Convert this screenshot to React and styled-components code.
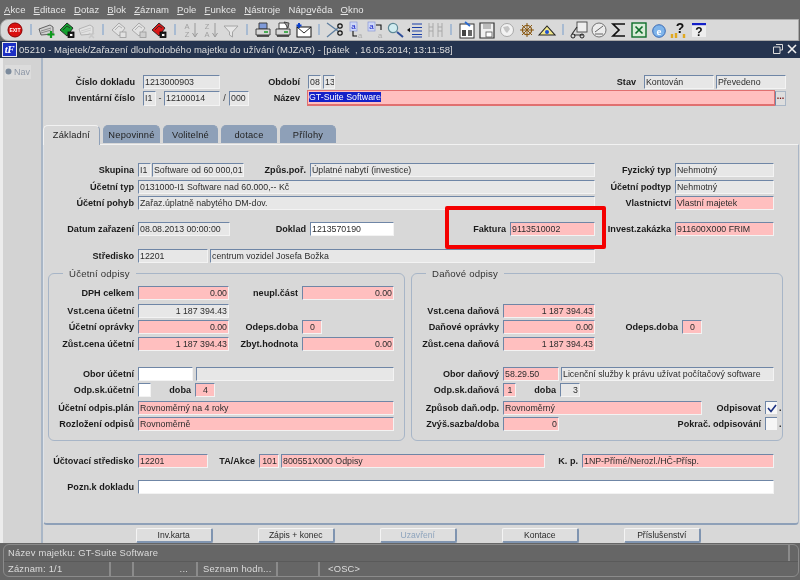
import React from 'react';
import styled, { createGlobalStyle } from 'styled-components';

const Global = createGlobalStyle`
  html, body { margin: 0; padding: 0; background: #666; }
  * { box-sizing: border-box; }
`;

const Screen = styled.div`
  width: 800px;
  height: 580px;
  overflow: hidden;
  display: flex;
  flex-direction: column;
  background: #d8d8d8;
  color: #1c1c1c;
  font-family: "Liberation Sans", Arial, sans-serif;
  font-size: 9px;
  filter: blur(0.3px);
`;

const MenuBar = styled.div`
  height: 19px;
  background: #666;
  color: #e6e6e6;
  display: flex;
  align-items: center;
  padding-left: 4px;
  gap: 8px;
  font-size: 9.5px;
  letter-spacing: 0.1px;
`;

const Toolbar = styled.div`
  height: 22px;
  background: #666;
  display: flex;
`;

const ToolbarInner = styled.div`
  flex: 1;
  margin-right: 1px;
  background: #d9d9d9;
  border: 1px solid #a9a9a9;
  border-radius: 8px 0 0 8px;
  display: flex;
  align-items: center;
  padding-left: 4px;
`;

const Slot = styled.div`
  width: 20px;
  height: 20px;
  display: flex;
  align-items: center;
  justify-content: center;
  flex: none;
`;

const Sep = styled.div`
  width: 12px;
  flex: none;
  display: flex;
  justify-content: center;
  &::after {
    content: "";
    width: 2px;
    height: 11px;
    background: #a8bbd2;
  }
`;

const TitleBar = styled.div`
  height: 17px;
  background: #25344f;
  color: #dcdcdc;
  display: flex;
  align-items: center;
  padding: 0 2px;
  font-size: 9.5px;
  letter-spacing: 0.03px;
  white-space: pre;
`;

const Logo = styled.div`
  width: 15px;
  height: 15px;
  background: #1c2fc4;
  border: 1px solid #e8e8e8;
  color: #fff;
  font: italic bold 11px "Liberation Serif", serif;
  line-height: 12px;
  text-align: center;
  margin-right: 2px;
  letter-spacing: -0.5px;
`;

const WindowIcons = styled.div`
  margin-left: auto;
  display: flex;
  gap: 4px;
  padding-right: 1px;
`;

const Body = styled.div`
  height: 486px;
  display: flex;
`;

const NavColumn = styled.div`
  width: 43px;
  flex: none;
  background: #d3d3d3;
  border-left: 3px solid #ececec;
  border-right: 2px solid #a9b6c6;
  padding: 7px 0 0 2px;
`;

const NavItem = styled.div`
  width: 26px;
  height: 14px;
  background: #dcdcdc;
  color: #8c96a6;
  display: flex;
  align-items: center;
  gap: 2px;
  font-size: 9px;
`;

const Content = styled.div`
  flex: 1;
  min-width: 0;
  display: flex;
  flex-direction: column;
`;

const Header = styled.div`
  height: 67px;
  padding-top: 17px;
`;

const Row = styled.div`
  display: flex;
  align-items: center;
  height: ${({ $h }) => $h || 14}px;
  margin-top: ${({ $mt }) => $mt || 0}px;
`;

const Label = styled.div`
  width: ${({ $w }) => $w}px;
  margin-right: ${({ $gap }) => ($gap === undefined ? 4 : $gap)}px;
  flex: none;
  text-align: right;
  font-weight: bold;
  white-space: nowrap;
  font-size: 9.1px;
  color: #1a1a1a;
`;

const fieldBg = { pink: '#ffbfbf', gray: '#e7e7e7', white: '#ffffff' };

const Field = styled.div`
  width: ${({ $w }) => $w}px;
  height: ${({ $h }) => $h || 14}px;
  margin-left: ${({ $ml }) => $ml || 0}px;
  flex: none;
  background: ${({ $tone }) => fieldBg[$tone || 'gray']};
  border-top: 1.5px solid #6f86a6;
  border-left: 1.5px solid #6f86a6;
  border-right: 1px solid #f3f3f3;
  border-bottom: 1px solid #f3f3f3;
  text-align: ${({ $right, $center }) => ($right ? 'right' : $center ? 'center' : 'left')};
  padding: 0 ${({ $right }) => ($right ? 1 : 0)}px 0 1px;
  line-height: 13px;
  font-size: 8.8px;
  color: #2c2c2c;
  white-space: nowrap;
  overflow: hidden;
`;

const NameField = styled(Field)`
  background: #ffbfbf;
  border: 1px solid #e07070;
  border-bottom-width: 2px;
  line-height: 13px;
  padding-left: 1px;
`;

const Selected = styled.span`
  background: #1420c8;
  color: #fff;
`;

const MoreButton = styled.div`
  width: 11px;
  height: 15px;
  background: #dedede;
  border: 1px solid #a9b6c6;
  border-left-color: #7088a8;
  color: #7a1010;
  font-weight: bold;
  font-size: 9px;
  line-height: 9px;
  text-align: center;
`;

const Glyph = styled.div`
  width: ${({ $w }) => $w}px;
  flex: none;
  text-align: center;
  color: #333;
`;

const TabStrip = styled.div`
  display: flex;
  gap: 3px;
  height: 19px;
  position: relative;
  z-index: 1;
`;

const Tab = styled.div`
  width: ${({ $w }) => $w}px;
  height: ${({ $active }) => ($active ? 20 : 18)}px;
  background: ${({ $active }) => ($active ? '#d8d8d8' : '#8ea0b8')};
  border-radius: 5px 5px 0 0;
  border-top: 1px solid ${({ $active }) => ($active ? '#f2f2f2' : '#8ea0b8')};
  border-left: 1px solid ${({ $active }) => ($active ? '#f2f2f2' : '#8ea0b8')};
  border-right: 1px solid #8ea0b8;
  text-align: center;
  line-height: 18px;
  font-size: 9.3px;
  letter-spacing: 0.2px;
  color: #222;
`;

const Panel = styled.div`
  position: relative;
  height: 381px;
  margin-right: 1px;
  border-top: 1px solid #f2f2f2;
  border-left: 1px solid #dfe3e8;
  border-right: 1px solid #aab6c6;
  border-bottom: 2px solid #8ea0b8;
  border-radius: 0 0 4px 4px;
  padding-top: 18px;
`;

const Highlight = styled.div`
  position: absolute;
  left: 401px;
  top: 61px;
  width: 161px;
  height: 43px;
  border: 4px solid #f40000;
  border-radius: 2px;
`;

const Groups = styled.div`
  display: flex;
  gap: 6px;
  margin: 5px 0 0 4px;
`;

const Group = styled.fieldset`
  width: ${({ $w }) => $w}px;
  height: 173px;
  margin: 0;
  padding: 6px 0 0;
  min-width: 0;
  border: 1px solid #a7b5c7;
  border-radius: 6px;
  legend {
    margin-left: 14px;
    padding: 0 6px;
    height: 12px;
    line-height: 12px;
    font-size: 9.6px;
    letter-spacing: 0.2px;
    color: #333;
  }
`;

const Check = styled.div`
  width: 12px;
  height: 13px;
  flex: none;
  background: #f6f6f6;
  border-top: 1.5px solid #6f86a6;
  border-left: 1.5px solid #6f86a6;
  display: flex;
  align-items: center;
  justify-content: center;
`;

const Dot = styled.span`
  margin-left: 2px;
  font-weight: bold;
`;

const ButtonBar = styled.div`
  display: flex;
  gap: 45.5px;
  padding: 3px 0 0 93px;
`;

const ActionButton = styled.div`
  width: 76.5px;
  height: 15px;
  background: #dedede;
  border-top: 1px solid #f4f4f4;
  border-left: 1px solid #f4f4f4;
  border-right: 2px solid #7f94b0;
  border-bottom: 2px solid #7f94b0;
  border-radius: 2px;
  text-align: center;
  line-height: 12px;
  font-size: 8.6px;
  color: ${({ $disabled }) => ($disabled ? '#8ea4bd' : '#2a2a2a')};
`;

const StatusBar = styled.div`
  flex: 1;
  background: #666;
  padding: 1px 1px 3px 3px;
  color: #dcdcdc;
  font-size: 9.4px;
  letter-spacing: 0.2px;
  display: flex;
`;

const StatusInner = styled.div`
  flex: 1;
  border: 1px solid #8b8b8b;
  border-radius: 6px;
  display: flex;
  flex-direction: column;
`;

const StatusMessage = styled.div`
  height: 16px;
  line-height: 16px;
  padding-left: 4px;
  margin-right: 8px;
  border-right: 2px solid #8b8b8b;
`;

const StatusCells = styled.div`
  flex: 1;
  display: flex;
  border-top: 1px solid #5a5a5a;
  line-height: 14px;
`;

const StatusCell = styled.div`
  width: ${({ $w }) => $w}px;
  flex: ${({ $w }) => ($w ? 'none' : 1)};
  padding: 0 ${({ $inset }) => $inset || 4}px;
  text-align: ${({ $right }) => ($right ? 'right' : 'left')};
  border-right: ${({ $open }) => ($open ? 'none' : '2px solid #8b8b8b')};
  white-space: nowrap;
`;

// toolbar pictures, all on a 20 x 20 grid
const Pic = ({ children }) => <svg width="20" height="20" viewBox="0 0 20 20">{children}</svg>;

const Exit = () => (
  <Pic>
    <circle cx="10" cy="10" r="7" fill="#d90f0f" stroke="#8a0000" />
    <text x="10" y="12" fontSize="5" fontWeight="bold" fill="#fff" textAnchor="middle" fontFamily="Liberation Sans">EXIT</text>
  </Pic>
);
const Stack = ({ tone, badge, dim }) => (
  <Pic>
    <path d="M2 9 L13 5 L16 7 L16 14 L4 15 Z" fill={tone} stroke={dim ? '#a8a8a8' : '#444'} strokeWidth="0.8" />
    <path d="M4 11 L14 8 M4 13 L14 10" stroke={dim ? '#c4c4c4' : '#777'} strokeWidth="0.8" />
    {badge === 'plus' && <path d="M14 11 V18 M10.5 14.5 H17.5" stroke="#0c9a1c" strokeWidth="2.2" />}
    {badge === 'cross' && <path d="M12 13 L17 18 M17 13 L12 18" stroke="#c8c8c8" strokeWidth="1.5" />}
  </Pic>
);
const Doc = ({ tone, edge, mark }) => (
  <Pic>
    <path d="M3 10 L10 3 L16 8 L10 16 Z" fill={tone} stroke={edge} strokeWidth="0.9" />
    <path d="M6 10 L10 6 L13 8" stroke={edge} strokeWidth="0.8" fill="none" />
    <rect x="11" y="12" width="6" height="5.5" fill={mark} stroke={edge === '#222' ? '#000' : '#999'} strokeWidth="0.8" />
    {edge === '#222' && <rect x="13" y="14" width="2.4" height="2" fill="#fff" />}
  </Pic>
);
const Sort = ({ top, bottom }) => (
  <Pic>
    <text x="6" y="9" fontSize="7.5" fill="#a0a0a0" fontFamily="Liberation Sans" textAnchor="middle">{top}</text>
    <text x="6" y="17" fontSize="7.5" fill="#a0a0a0" fontFamily="Liberation Sans" textAnchor="middle">{bottom}</text>
    <path d="M14 3 V16 M11.5 13 L14 17 L16.5 13" stroke="#999" strokeWidth="1" fill="none" />
  </Pic>
);
const Funnel = () => (
  <Pic>
    <path d="M3 6 H17 L11.5 12 V17 L8.5 15 V12 Z" fill="#e6e6e6" stroke="#a4a4a4" />
  </Pic>
);
const Printer = ({ tilt }) => (
  <Pic>
    <path d="M6 3 H14 V9 H6 Z" fill={tilt ? '#fff' : '#7f9ad8'} stroke="#333" strokeWidth="0.9" />
    {tilt && <path d="M11 2 L16 3 L15 8 Z" fill="#9a9a9a" stroke="#333" strokeWidth="0.8" />}
    <path d="M3 9 H17 V15 H3 Z" fill="#d8d8d8" stroke="#333" strokeWidth="0.9" />
    <path d="M4 16 H16" stroke="#333" strokeWidth="1.6" />
    <path d="M11 12 H15" stroke="#0c9a1c" strokeWidth="1.4" />
  </Pic>
);
const Mail = () => (
  <Pic>
    <rect x="4" y="7" width="14" height="10" fill="#fff" stroke="#111" />
    <path d="M4 7 L11 13 L18 7" fill="none" stroke="#111" strokeWidth="0.9" />
    <path d="M6 3 V8 M3.5 5.5 H8.5" stroke="#0a3ec8" strokeWidth="1.9" />
  </Pic>
);
const Scissors = () => (
  <Pic>
    <path d="M2 3 L13 11 M2 17 L13 8" stroke="#5f7fa0" strokeWidth="1.3" />
    <circle cx="15" cy="6" r="2.2" fill="none" stroke="#111" strokeWidth="1.2" />
    <circle cx="15" cy="13" r="2.2" fill="none" stroke="#111" strokeWidth="1.2" />
  </Pic>
);
const Letter = ({ flip }) => (
  <Pic>
    <rect x={flip ? 3 : 5} y="2" width="7" height="9" fill="#cfd8f6" stroke="#8a98d8" strokeWidth="0.7" />
    <text x={flip ? 6.5 : 8.5} y="9" fontSize="8" fill="#1420c8" fontFamily="Liberation Sans" textAnchor="middle">a</text>
    <text x="15" y="18" fontSize="7.5" fill="#aaa" fontFamily="Liberation Sans" textAnchor="middle">a</text>
    <path d={flip ? 'M11 5 H16 V10' : 'M8 11 V16 H12'} fill="none" stroke="#111" strokeWidth="1.1" />
  </Pic>
);
const Lens = () => (
  <Pic>
    <circle cx="8" cy="8" r="4.6" fill="#d0ecf0" stroke="#5f8a98" strokeWidth="1.2" />
    <path d="M12 12 L18 17" stroke="#2f4f9a" strokeWidth="2" />
  </Pic>
);
const ListLines = () => (
  <Pic>
    <path d="M2 10 L5 7.8 V12.2 Z" fill="#111" />
    <path d="M7 4 H17 M7 7.5 H17 M7 11 H17 M7 14.5 H17 M7 17 H17" stroke="#1b3fa8" strokeWidth="1.2" />
  </Pic>
);
const GridLines = () => (
  <Pic>
    <path d="M4 3 V17 M8 3 V17 M13 3 V17 M17 3 V17 M4 7 H8 M4 11 H8 M13 7 H17 M13 11 H17" stroke="#a4a4a4" strokeWidth="0.9" />
  </Pic>
);
const Clipboard = () => (
  <Pic>
    <rect x="3" y="4" width="14" height="14" fill="#fff" stroke="#333" />
    <rect x="5" y="10" width="4" height="6" fill="#444" />
    <rect x="11" y="10" width="4" height="6" fill="#666" />
    <path d="M8 2 L13 6" stroke="#2a6ad0" strokeWidth="1.8" />
  </Pic>
);
const Disk = () => (
  <Pic>
    <path d="M3 3 H17 V18 H3 Z" fill="#f0f0f0" stroke="#333" strokeWidth="1.2" />
    <rect x="6" y="4" width="8" height="5" fill="#bbb" />
    <rect x="9" y="12" width="6" height="5" fill="#fff" stroke="#555" strokeWidth="0.8" />
  </Pic>
);
const Globe = () => (
  <Pic>
    <circle cx="10" cy="10" r="6.5" fill="#f2f2f2" stroke="#a8a8a8" />
    <path d="M6 7 L11 6 L13 9 L10 13 L8 11 Z" fill="#c4c4c4" />
  </Pic>
);
const Wheel = () => (
  <Pic>
    <circle cx="10" cy="10" r="4.6" fill="none" stroke="#8a5a14" strokeWidth="1.3" />
    <path d="M10 3 V17 M3 10 H17 M5 5 L15 15 M15 5 L5 15" stroke="#8a5a14" strokeWidth="1" />
  </Pic>
);
const Roof = () => (
  <Pic>
    <path d="M2 15 L10 6 L18 15 Z" fill="#f0e68a" stroke="#222" strokeWidth="1.1" />
    <circle cx="10" cy="12" r="2" fill="#1d4fd0" />
  </Pic>
);
const Cart = () => (
  <Pic>
    <rect x="8" y="2" width="10" height="10" fill="#eee" stroke="#444" strokeWidth="0.9" />
    <path d="M3 14 L8 7 M5 15 H14" stroke="#333" strokeWidth="1.2" />
    <circle cx="4" cy="16" r="2" fill="none" stroke="#111" strokeWidth="0.9" />
    <circle cx="13" cy="16" r="2" fill="none" stroke="#111" strokeWidth="0.9" />
  </Pic>
);
const Dial = () => (
  <Pic>
    <circle cx="10" cy="10" r="7" fill="#ececec" stroke="#666" strokeWidth="0.9" />
    <path d="M6 12 L14 6 M6 14 H14" stroke="#555" strokeWidth="0.9" />
  </Pic>
);
const Sigma = () => (
  <Pic>
    <path d="M16 4 H4 L10 10 L4 16 H16" fill="none" stroke="#111" strokeWidth="1.7" />
  </Pic>
);
const Excel = () => (
  <Pic>
    <rect x="3" y="3" width="14" height="14" fill="#d8ecd8" stroke="#0e6e2a" strokeWidth="1.4" />
    <path d="M6.5 6.5 L13.5 13.5 M13.5 6.5 L6.5 13.5" stroke="#0e6e2a" strokeWidth="1.7" />
  </Pic>
);
const Ie = () => (
  <Pic>
    <circle cx="10" cy="11" r="6.3" fill="#7fb4ea" stroke="#2a5fb0" strokeWidth="0.9" />
    <text x="10" y="15" fontSize="11" fontWeight="bold" fill="#fff" textAnchor="middle" fontFamily="Liberation Serif">e</text>
  </Pic>
);
const HelpCoins = () => (
  <Pic>
    <text x="11" y="13" fontSize="14" fontWeight="bold" fill="#111" textAnchor="middle" fontFamily="Liberation Sans">?</text>
    <path d="M3 14 V18 M7 13 V18 M15 14 V18" stroke="#e0a820" strokeWidth="2.4" />
  </Pic>
);
const HelpBar = () => (
  <Pic>
    <rect x="3" y="3" width="14" height="14" fill="#eee" />
    <rect x="3" y="3" width="14" height="2.2" fill="#1420c8" />
    <text x="10" y="16" fontSize="12" fontWeight="bold" fill="#111" textAnchor="middle" fontFamily="Liberation Sans">?</text>
  </Pic>
);

const toolGroups = [
  [<Exit />],
  [<Stack tone="#d0d0d0" badge="plus" />, <Doc tone="#14a030" edge="#222" mark="#222" />, <Stack tone="#e2e2e2" badge="cross" dim />],
  [<Doc tone="#e2e2e2" edge="#a4a4a4" mark="#e2e2e2" />, <Doc tone="#e2e2e2" edge="#a4a4a4" mark="#cfcfcf" />, <Doc tone="#d81818" edge="#222" mark="#222" />],
  [<Sort top="A" bottom="Z" />, <Sort top="Z" bottom="A" />, <Funnel />],
  [<Printer />, <Printer tilt />, <Mail />],
  [<Scissors />, <Letter />, <Letter flip />, <Lens />, <ListLines />, <GridLines />],
  [<Clipboard />, <Disk />, <Globe />, <Wheel />, <Roof />],
  [<Cart />, <Dial />, <Sigma />, <Excel />, <Ie />, <HelpCoins />, <HelpBar />],
];

const menus = [
  ['', 'A', 'kce'], ['', 'E', 'ditace'], ['', 'D', 'otaz'], ['', 'B', 'lok'], ['', 'Z', 'áznam'],
  ['', 'P', 'ole'], ['', 'F', 'unkce'], ['', 'N', 'ástroje'], ['Náp', 'o', 'věda'], ['', 'O', 'kno'],
];

const tabs = [['Základní', 57], ['Nepovinné', 57], ['Volitelné', 55], ['dotace', 56], ['Přílohy', 56]];
const buttons = ['Inv.karta', 'Zápis + konec', 'Uzavření', 'Kontace', 'Příslušenství'];

const App = () => (
  <Screen>
    <Global />
    <MenuBar>
      {menus.map(([pre, key, post]) => (
        <span key={pre + key + post}>{pre}<u>{key}</u>{post}</span>
      ))}
    </MenuBar>
    <Toolbar>
      <ToolbarInner>
        {toolGroups.map((group, i) => (
          <React.Fragment key={i}>
            {i > 0 && <Sep />}
            {group.map((icon, j) => <Slot key={j}>{icon}</Slot>)}
          </React.Fragment>
        ))}
      </ToolbarInner>
    </Toolbar>
    <TitleBar>
      <Logo>tF</Logo>
      05210 - Majetek/Zařazení dlouhodobého majetku do užívání (MJZAR) - [pátek  , 16.05.2014; 13:11:58]
      <WindowIcons>
        <svg width="10" height="10" viewBox="0 0 10 10">
          <path d="M3 .5 H9.5 V6 H7 M.5 3 H7 V9.5 H.5 Z" fill="none" stroke="#dcdcdc" />
        </svg>
        <svg width="10" height="10" viewBox="0 0 10 10">
          <path d="M1 1 L9 9 M9 1 L1 9" stroke="#f0f0f0" strokeWidth="1.6" />
        </svg>
      </WindowIcons>
    </TitleBar>
    <Body>
      <NavColumn>
        <NavItem>
          <svg width="7" height="7" viewBox="0 0 7 7"><circle cx="3.5" cy="3.5" r="3" fill="#7b8a9c" /></svg>
          Nav
        </NavItem>
      </NavColumn>
      <Content>
        <Header>
          <Row>
            <Label $w={92} $gap={8}>Číslo dokladu</Label>
            <Field $w={77}>1213000903</Field>
            <Label $w={80} $gap={8}>Období</Label>
            <Field $w={13}>08</Field>
            <Field $w={12} $ml={2}>13</Field>
            <Label $w={301} $gap={8}>Stav</Label>
            <Field $w={70}>Kontován</Field>
            <Field $w={70} $ml={2}>Převedeno</Field>
          </Row>
          <Row $h={15} $mt={2}>
            <Label $w={92} $gap={8}>Inventární číslo</Label>
            <Field $w={13} $h={15}>I1</Field>
            <Glyph $w={8}>-</Glyph>
            <Field $w={56} $h={15}>12100014</Field>
            <Glyph $w={9}>/</Glyph>
            <Field $w={20} $h={15}>000</Field>
            <Label $w={51} $gap={7}>Název</Label>
            <NameField $w={468} $h={16}><Selected>GT-Suite Software</Selected></NameField>
            <MoreButton>...</MoreButton>
          </Row>
        </Header>
        <TabStrip>
          {tabs.map(([name, w], i) => <Tab key={name} $w={w} $active={i === 0}>{name}</Tab>)}
        </TabStrip>
        <Panel>
          <Highlight />
          <Row>
            <Label $w={90}>Skupina</Label>
            <Field $w={13}>I1</Field>
            <Field $w={92} $ml={1}>Software od 60 000,01</Field>
            <Label $w={62}>Způs.poř.</Label>
            <Field $w={285}>Úplatné nabytí (investice)</Field>
            <Label $w={76}>Fyzický typ</Label>
            <Field $w={99}>Nehmotný</Field>
          </Row>
          <Row $mt={3}>
            <Label $w={90}>Účetní typ</Label>
            <Field $w={457}>0131000-I1 Software nad 60.000,-- Kč</Field>
            <Label $w={76}>Účetní podtyp</Label>
            <Field $w={99}>Nehmotný</Field>
          </Row>
          <Row $mt={2}>
            <Label $w={90}>Účetní pohyb</Label>
            <Field $w={457}>Zařaz.úplatně nabytého DM-dov.</Field>
            <Label $w={76}>Vlastnictví</Label>
            <Field $w={99} $tone="pink">Vlastní majetek</Field>
          </Row>
          <Row $mt={12}>
            <Label $w={90}>Datum zařazení</Label>
            <Field $w={92}>08.08.2013 00:00:00</Field>
            <Label $w={76}>Doklad</Label>
            <Field $w={84} $tone="white">1213570190</Field>
            <Label $w={112}>Faktura</Label>
            <Field $w={85} $tone="pink">9113510002</Field>
            <Label $w={76}>Invest.zakázka</Label>
            <Field $w={99} $tone="pink">911600X000 FRIM</Field>
          </Row>
          <Row $mt={13}>
            <Label $w={90}>Středisko</Label>
            <Field $w={70}>12201</Field>
            <Field $w={385} $ml={2}>centrum vozidel Josefa Božka</Field>
          </Row>
          <Groups>
            <Group $w={357}>
              <legend>Účetní odpisy</legend>
              <Row>
                <Label $w={85}>DPH celkem</Label>
                <Field $w={91} $tone="pink" $right>0.00</Field>
                <Label $w={69}>neupl.část</Label>
                <Field $w={92} $tone="pink" $right>0.00</Field>
              </Row>
              <Row $mt={4}>
                <Label $w={85}>Vst.cena účetní</Label>
                <Field $w={91} $right>1 187 394.43</Field>
              </Row>
              <Row $mt={2}>
                <Label $w={85}>Účetní oprávky</Label>
                <Field $w={91} $tone="pink" $right>0.00</Field>
                <Label $w={69}>Odeps.doba</Label>
                <Field $w={20} $tone="pink" $center>0</Field>
              </Row>
              <Row $mt={3}>
                <Label $w={85}>Zůst.cena účetní</Label>
                <Field $w={91} $tone="pink" $right>1 187 394.43</Field>
                <Label $w={69}>Zbyt.hodnota</Label>
                <Field $w={92} $tone="pink" $right>0.00</Field>
              </Row>
              <Row $mt={16}>
                <Label $w={85}>Obor účetní</Label>
                <Field $w={55} $tone="white" />
                <Field $w={198} $ml={3} />
              </Row>
              <Row $mt={2}>
                <Label $w={85}>Odp.sk.účetní</Label>
                <Field $w={13} $tone="white" />
                <Label $w={40}>doba</Label>
                <Field $w={20} $tone="pink" $center>4</Field>
              </Row>
              <Row $mt={4}>
                <Label $w={85}>Účetní odpis.plán</Label>
                <Field $w={256} $tone="pink">Rovnoměrný na 4 roky</Field>
              </Row>
              <Row $mt={2}>
                <Label $w={85}>Rozložení odpisů</Label>
                <Field $w={256} $tone="pink">Rovnoměrně</Field>
              </Row>
            </Group>
            <Group $w={372}>
              <legend>Daňové odpisy</legend>
              <Row $mt={18}>
                <Label $w={87}>Vst.cena daňová</Label>
                <Field $w={92} $tone="pink" $right>1 187 394.43</Field>
              </Row>
              <Row $mt={2}>
                <Label $w={87}>Daňové oprávky</Label>
                <Field $w={92} $tone="pink" $right>0.00</Field>
                <Label $w={83}>Odeps.doba</Label>
                <Field $w={20} $tone="pink" $center>0</Field>
              </Row>
              <Row $mt={3}>
                <Label $w={87}>Zůst.cena daňová</Label>
                <Field $w={92} $tone="pink" $right>1 187 394.43</Field>
              </Row>
              <Row $mt={16}>
                <Label $w={87}>Obor daňový</Label>
                <Field $w={56} $tone="pink">58.29.50</Field>
                <Field $w={213} $ml={2}>Licenční služby k právu užívat počítačový software</Field>
              </Row>
              <Row $mt={2}>
                <Label $w={87}>Odp.sk.daňová</Label>
                <Field $w={13} $tone="pink" $center>1</Field>
                <Label $w={40}>doba</Label>
                <Field $w={20} $right>3</Field>
              </Row>
              <Row $mt={4}>
                <Label $w={87}>Způsob daň.odp.</Label>
                <Field $w={199} $tone="pink">Rovnoměrný</Field>
                <Label $w={59}>Odpisovat</Label>
                <Check>
                  <svg width="10" height="9" viewBox="0 0 10 9">
                    <path d="M1 4 L4 7.5 L9 1" fill="none" stroke="#1a2f80" strokeWidth="1.6" />
                  </svg>
                </Check>
                <Dot>.</Dot>
              </Row>
              <Row $mt={2}>
                <Label $w={87}>Zvýš.sazba/doba</Label>
                <Field $w={56} $tone="pink" $right>0</Field>
                <Label $w={202}>Pokrač. odpisování</Label>
                <Check />
                <Dot>.</Dot>
              </Row>
            </Group>
          </Groups>
          <Row $mt={13}>
            <Label $w={90}>Účtovací středisko</Label>
            <Field $w={70} $tone="pink">12201</Field>
            <Label $w={47}>TA/Akce</Label>
            <Field $w={20} $tone="pink" $center>101</Field>
            <Field $w={264} $ml={2} $tone="pink">800551X000 Odpisy</Field>
            <Label $w={33}>K. p.</Label>
            <Field $w={192} $tone="pink">1NP-Přímé/Nerozl./HČ-Přísp.</Field>
          </Row>
          <Row $mt={12}>
            <Label $w={90}>Pozn.k dokladu</Label>
            <Field $w={636} $tone="white" />
          </Row>
        </Panel>
        <ButtonBar>
          {buttons.map((b) => <ActionButton key={b} $disabled={b === 'Uzavření'}>{b}</ActionButton>)}
        </ButtonBar>
      </Content>
    </Body>
    <StatusBar>
      <StatusInner>
        <StatusMessage>Název majetku: GT-Suite Software</StatusMessage>
        <StatusCells>
          <StatusCell $w={107}>Záznam: 1/1</StatusCell>
          <StatusCell $w={23} />
          <StatusCell $w={64} $right $inset={8}>...</StatusCell>
          <StatusCell $w={80} $inset={5}>Seznam hodn...</StatusCell>
          <StatusCell $w={42} />
          <StatusCell $w={66} $inset={8} $open>&lt;OSC&gt;</StatusCell>
          <StatusCell $open />
        </StatusCells>
      </StatusInner>
    </StatusBar>
  </Screen>
);

export default App;
